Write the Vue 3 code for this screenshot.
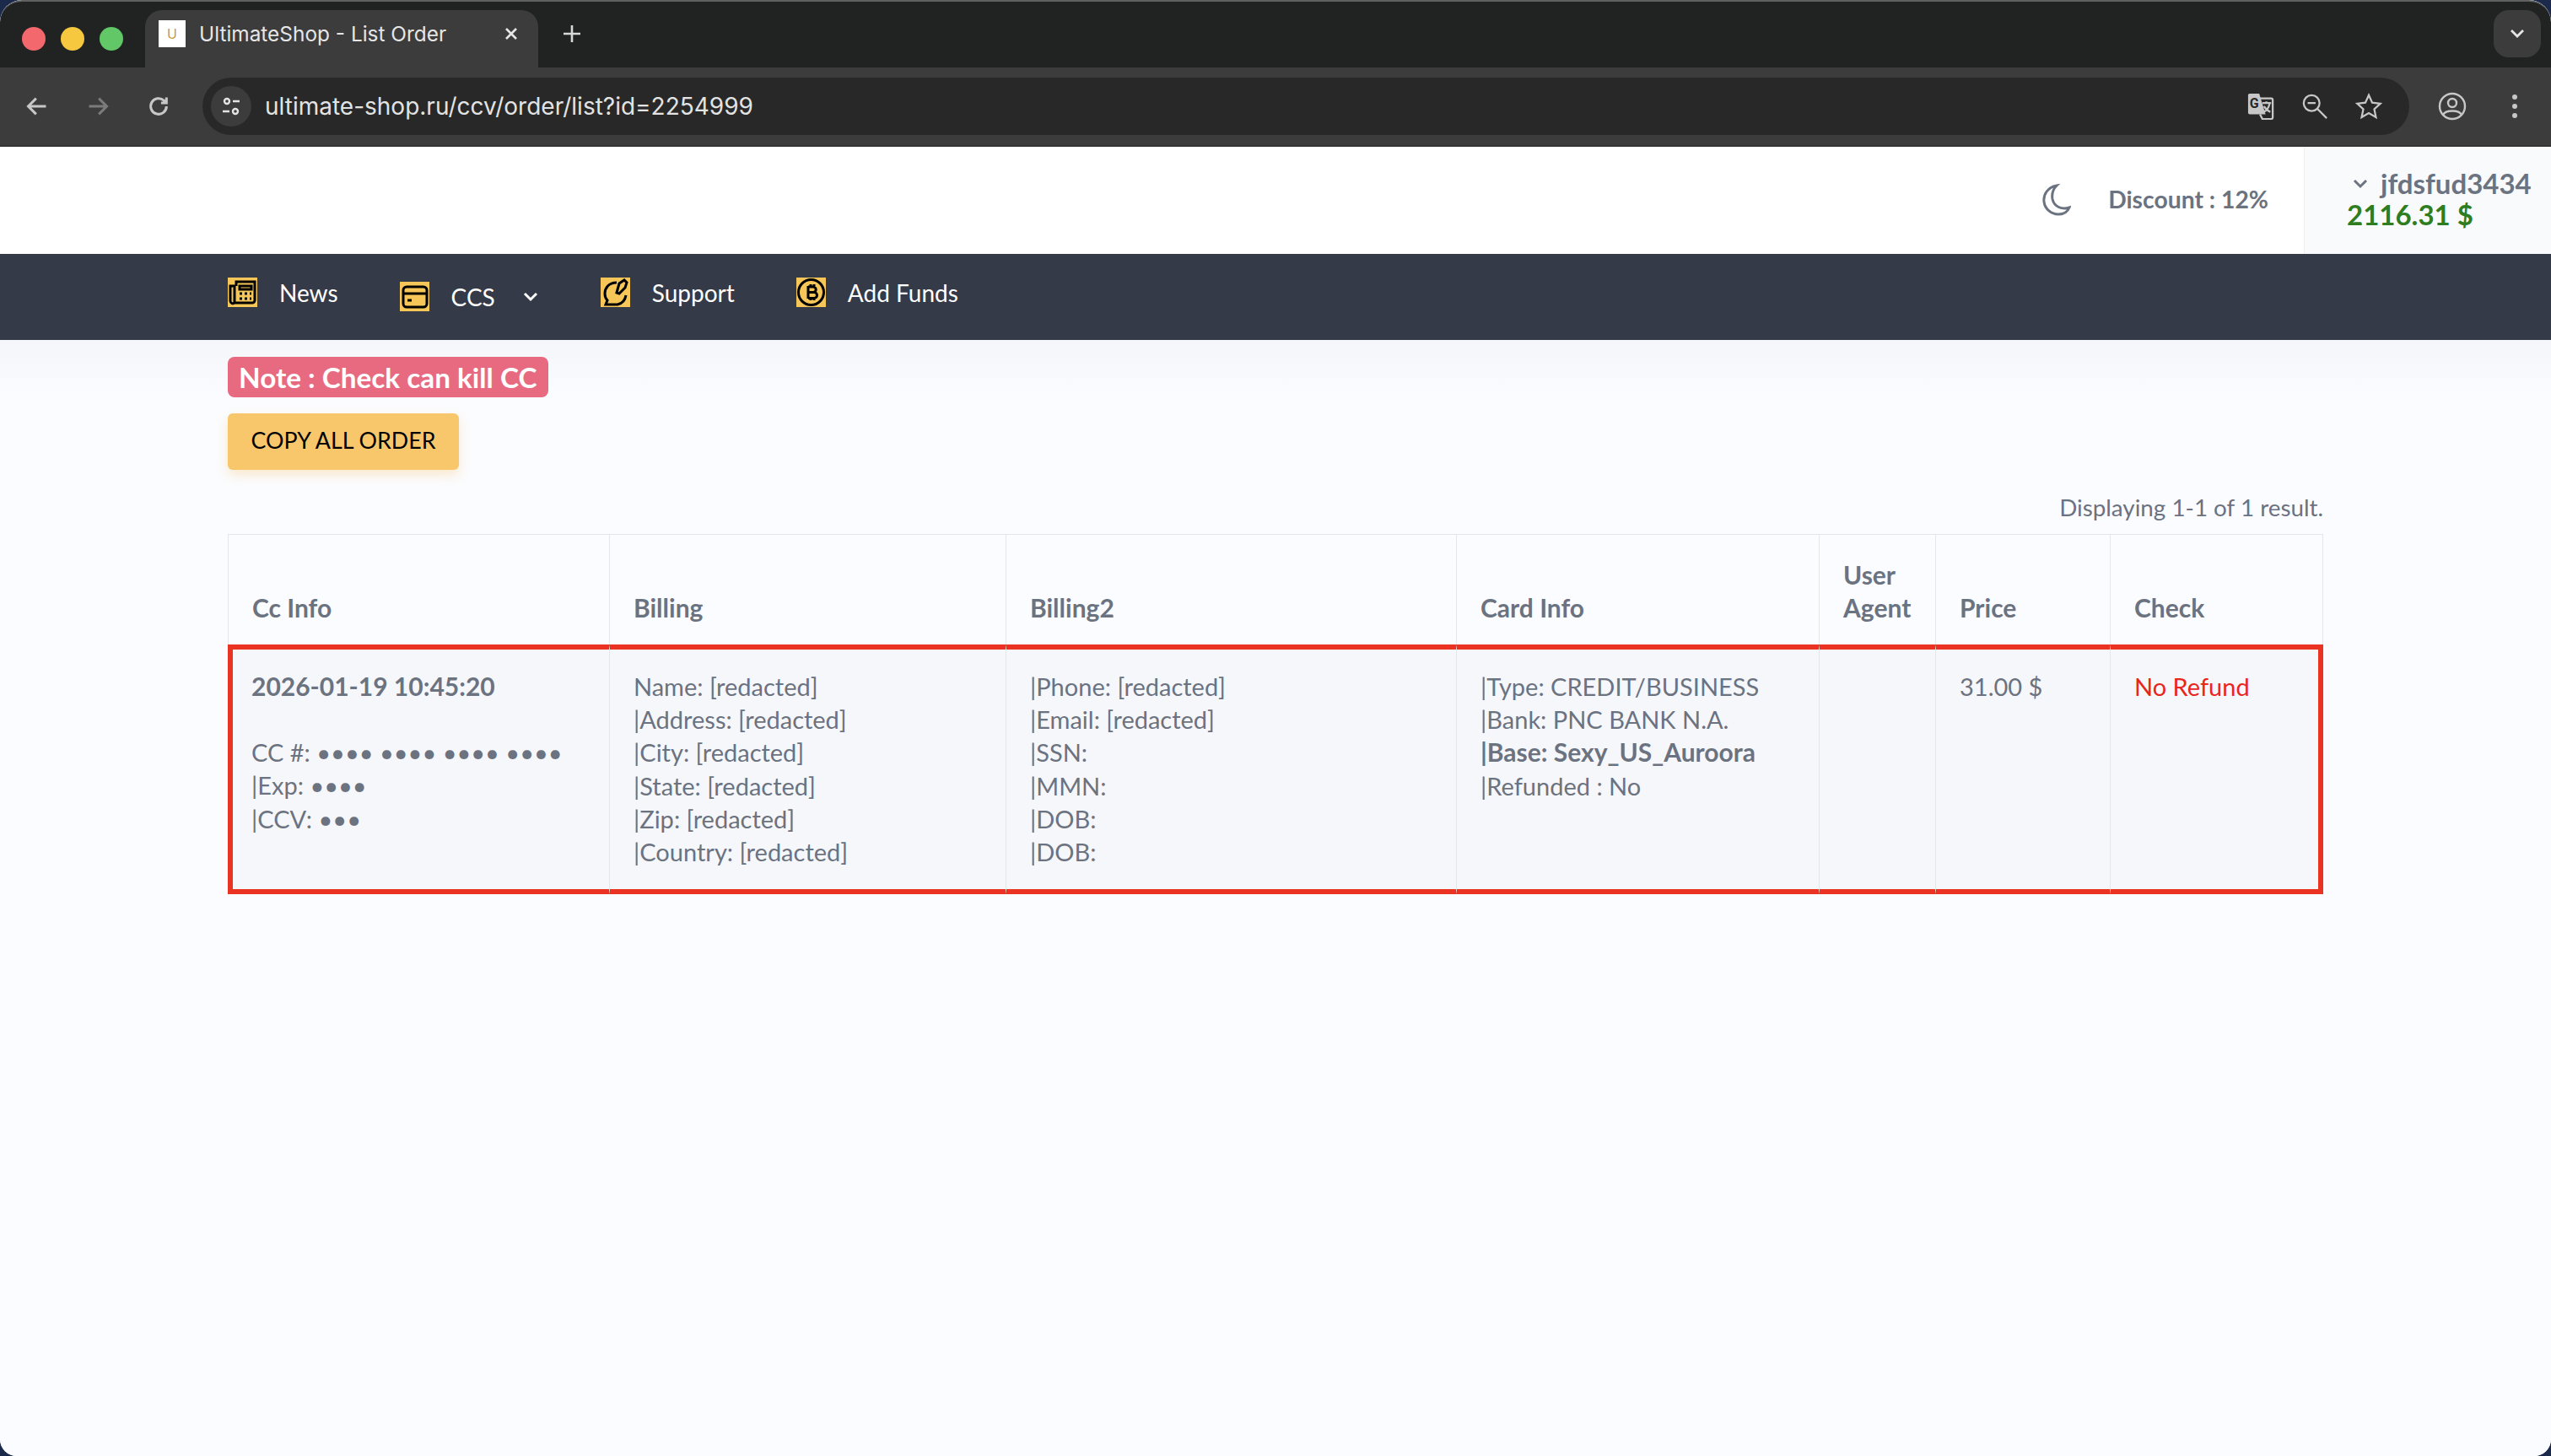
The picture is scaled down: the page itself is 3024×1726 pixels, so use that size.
<script setup>
const navItems = [
  { label: 'News', icon: 'news' },
  { label: 'CCS', icon: 'card', caret: true, low: true },
  { label: 'Support', icon: 'support' },
  { label: 'Add Funds', icon: 'coin' }
]
const columns = [
  { label: 'Cc Info', width: 453 },
  { label: 'Billing', width: 470 },
  { label: 'Billing2', width: 534 },
  { label: 'Card Info', width: 430 },
  { label: 'User Agent', width: 138 },
  { label: 'Price', width: 207 },
  { label: 'Check', width: 252 }
]
const ccLines = ['CC #: •••• •••• •••• ••••', '|Exp: ••••', '|CCV: •••']
const billing = ['Name: [redacted]', '|Address: [redacted]', '|City: [redacted]', '|State: [redacted]', '|Zip: [redacted]', '|Country: [redacted]']
const billing2 = ['|Phone: [redacted]', '|Email: [redacted]', '|SSN:', '|MMN:', '|DOB:', '|DOB:']
</script>

<template>
  <div class="window">
    <div class="tabbar">
      <div class="lights">
        <span class="light red"></span><span class="light yellow"></span><span class="light green"></span>
      </div>
      <div class="tab">
        <span class="favicon"><span class="fav-u">U</span></span>
        <span class="tab-title">UltimateShop - List Order</span>
        <svg class="tab-close" viewBox="0 0 20 20"><path d="M4 4l12 12M16 4L4 16" /></svg>
      </div>
      <svg class="new-tab" viewBox="0 0 24 24"><path d="M12 2v20M2 12h20" /></svg>
      <span class="tabbar-fill"></span>
      <span class="tab-menu"><svg viewBox="0 0 20 20"><path d="M3 6l7 7 7-7" /></svg></span>
    </div>
    <div class="toolbar">
      <svg class="tool" viewBox="0 0 24 24"><path d="M21 12H4M11 4l-8 8 8 8" /></svg>
      <svg class="tool dim" viewBox="0 0 24 24"><path d="M3 12h17M13 4l8 8-8 8" /></svg>
      <svg class="tool" viewBox="0 0 24 24"><path d="M20 12a8 8 0 1 1-2.6-5.9L20 8.5M20 3v5.5h-5.5" /></svg>
      <div class="omnibox">
        <span class="site-btn">
          <svg viewBox="0 0 24 24"><circle cx="7" cy="6" r="3" /><path d="M14 6h8M2 18h8" /><circle cx="17" cy="18" r="3" /></svg>
        </span>
        <span class="url">ultimate-shop.ru/ccv/order/list?id=2254999</span>
        <span class="omni-icons">
          <svg class="omni-icon" viewBox="0 0 34 34">
            <path class="solid" d="M3 1h12l8 26H3a2 2 0 0 1-2-2V3a2 2 0 0 1 2-2z" />
            <path d="M15 7h15a2 2 0 0 1 2 2v22a2 2 0 0 1-2 2H19l-3-6" />
            <path d="M19 13h11M24 11v3M21 24c4-2 6-6 7-10M21 17c2 3 5 6 8 7" />
            <text x="3" y="19" class="g">G</text>
          </svg>
          <svg class="omni-icon" viewBox="0 0 34 34"><circle cx="13" cy="13" r="10" /><path d="M20 20l12 12M8 13h10" /></svg>
          <svg class="omni-icon" viewBox="0 0 34 34"><path d="M17 3l4.3 9.4 10.2 1.2-7.6 7 2.1 10.1-9-5.2-9 5.2 2.1-10.1-7.6-7 10.2-1.2z" /></svg>
        </span>
      </div>
      <svg class="tool profile" viewBox="0 0 34 34"><circle cx="17" cy="17" r="15" /><circle cx="17" cy="13" r="5" /><path d="M6 27c3-6 19-6 22 0" /></svg>
      <span class="dots"><i></i><i></i><i></i></span>
    </div>

    <header class="site-header">
      <svg class="moon" viewBox="0 0 36 40"><path d="M19 3C8 5 3 14 4 22c1 9 9 15 17 15 6 0 11-3 13-8-9 3-18-1-20-10-1-6 1-12 5-16z" /></svg>
      <span class="discount">Discount : 12%</span>
      <div class="account">
        <div class="user-line">
          <svg class="user-caret" viewBox="0 0 20 14"><path d="M3 3l7 7 7-7" /></svg>
          <span class="user">jfdsfud3434</span>
        </div>
        <div class="balance">2116.31 $</div>
      </div>
    </header>

    <nav class="nav">
      <a v-for="item in navItems" :key="item.label" class="nav-item" :class="{ low: item.low }">
        <svg class="nav-icon" viewBox="0 0 35 35">
          <rect width="35" height="35" class="nav-icon-bg" />
          <g v-if="item.icon === 'news'">
            <path d="M3 10h5v20a3 3 0 0 1-5-2zM8 30h21a3 3 0 0 0 3-3V5H10v5" />
            <path d="M14 10h14v4H14zM14 19h3M20 19h3M26 19h2M14 25h3M20 25h3M26 25h2" />
          </g>
          <g v-else-if="item.icon === 'card'">
            <rect x="4" y="6" width="28" height="24" rx="4" />
            <path d="M4 14h28M9 22h5" />
          </g>
          <g v-else-if="item.icon === 'support'">
            <path d="M19 6C9 6 5 13 5 19c0 3 1 6 3 8l-2 5h14c5-1 9-5 10-11" />
            <path d="M19 18l3-11 6-4 3 3-2 6-7 7z" />
          </g>
          <g v-else>
            <circle cx="17.5" cy="17.5" r="15" />
            <path d="M14 10v15M14 11h6a3 3 0 0 1 0 6.5h-6M14 17.5h7a3.5 3.5 0 0 1 0 7h-7M17 8v3M21 8v3M17 24v3M21 24v3" />
          </g>
        </svg>
        <span class="nav-label">{{ item.label }}</span>
        <svg v-if="item.caret" class="nav-caret" viewBox="0 0 20 14"><path d="M3 3l7 7 7-7" /></svg>
      </a>
    </nav>

    <main class="content">
      <div><span class="note">Note : Check can kill CC</span></div>
      <button class="copy-btn">COPY ALL ORDER</button>
      <div class="summary">Displaying 1-1 of 1 result.</div>
      <table class="orders">
        <colgroup><col v-for="c in columns" :key="c.label" :style="{ width: c.width + 'px' }" /></colgroup>
        <thead>
          <tr><th v-for="c in columns" :key="c.label">{{ c.label }}</th></tr>
        </thead>
        <tbody>
          <tr>
            <td>
              <strong>2026-01-19 10:45:20</strong>
              <div class="gap"></div>
              <div v-for="l in ccLines" :key="l">{{ l }}</div>
            </td>
            <td><div v-for="l in billing" :key="l">{{ l }}</div></td>
            <td><div v-for="(l, i) in billing2" :key="i">{{ l }}</div></td>
            <td>
              <div>|Type: CREDIT/BUSINESS</div>
              <div>|Bank: PNC BANK N.A.</div>
              <strong>|Base: Sexy_US_Auroora</strong>
              <div>|Refunded : No</div>
            </td>
            <td></td>
            <td>31.00 $</td>
            <td class="refund">No Refund</td>
          </tr>
        </tbody>
      </table>
    </main>
  </div>
</template>

<style>
html, body { margin: 0; background: #1b2a4a; }
</style>

<style scoped>
.window {
  width: 3024px;
  height: 1726px;
  display: flex;
  flex-direction: column;
  overflow: hidden;
  border-radius: 26px 26px 20px 20px;
  background: #fbfcff;
  font-family: Lato, "Noto Sans", sans-serif;
  color: #6b7280;
}
svg { fill: none; stroke: currentColor; flex: none; }

.tabbar {
  height: 80px;
  flex: none;
  background: #212323;
  display: flex;
  align-items: flex-end;
  box-sizing: border-box;
  padding: 10px 12px 0 26px;
  border-top: 2px solid #5f6060;
  border-radius: 26px 26px 0 0;
}
.lights { display: flex; gap: 18px; align-self: center; }
.light { width: 28px; height: 28px; border-radius: 50%; }
.red { background: #f2686c; }
.yellow { background: #f5c83f; }
.green { background: #62c766; }
.tab {
  margin-left: 26px;
  width: 466px;
  height: 68px;
  box-sizing: border-box;
  padding: 0 22px 12px 16px;
  display: flex;
  align-items: center;
  background: #3c3c3c;
  border-radius: 20px 20px 0 0;
  color: #e6e6e6;
  font: 24.4px Inter, Roboto, sans-serif;
}
.favicon {
  width: 32px;
  height: 32px;
  background: #fff;
  display: flex;
  align-items: center;
  justify-content: center;
}
.fav-u { color: #c89b3c; font-size: 16px; line-height: 1; }
.tab-title { margin-left: 16px; flex: 1; white-space: nowrap; }
.tab-close { width: 20px; height: 20px; stroke-width: 2.6; }
.new-tab { width: 24px; height: 24px; margin: 0 0 28px 28px; color: #d8d8d8; stroke-width: 2.6; }
.tabbar-fill { flex: 1; }
.tab-menu {
  width: 56px;
  height: 56px;
  margin-bottom: 12px;
  border-radius: 18px;
  background: #3c3c3c;
  display: flex;
  align-items: center;
  justify-content: center;
  color: #e6e6e6;
}
.tab-menu svg { width: 20px; height: 20px; stroke-width: 2.8; }

.toolbar {
  height: 94px;
  flex: none;
  box-sizing: border-box;
  background: #3c3c3c;
  border-bottom: 2px solid #343434;
  display: flex;
  align-items: center;
  padding: 0 30px;
  color: #c7c7c7;
}
.tool { width: 28px; height: 28px; margin-right: 44px; stroke-width: 2.6; }
.dim { color: #7b7b7b; }
.omnibox {
  width: 2616px;
  height: 68px;
  margin-left: -6px;
  border-radius: 34px;
  background: #282828;
  display: flex;
  align-items: center;
  padding: 0 32px 0 10px;
  box-sizing: border-box;
  flex: none;
}
.site-btn {
  width: 48px;
  height: 48px;
  border-radius: 50%;
  background: #3c3c3c;
  display: flex;
  align-items: center;
  justify-content: center;
  color: #e3e3e3;
}
.site-btn svg { width: 24px; height: 24px; stroke-width: 2.4; }
.url { margin-left: 16px; flex: 1; color: #e3e3e3; font: 28px Inter, Roboto, sans-serif; }
.omni-icons { display: flex; align-items: center; gap: 32px; color: #c7c7c7; }
.omni-icon { width: 32px; height: 32px; stroke-width: 2.4; }
.solid { fill: #c7c7c7; stroke: none; }
.g { fill: #282828; stroke: none; font: bold 17px Roboto, sans-serif; }
.profile { width: 34px; height: 34px; margin: 0 0 0 34px; stroke-width: 2.4; }
.dots { margin-left: 54px; display: flex; flex-direction: column; gap: 5px; }
.dots i { width: 6px; height: 6px; border-radius: 50%; background: #c7c7c7; display: block; }

.site-header {
  height: 127px;
  flex: none;
  display: flex;
  align-items: center;
  justify-content: flex-end;
  background: #fff;
}
.moon { width: 36px; height: 40px; margin-top: -1px; stroke-width: 3; color: #6b7280; }
.discount { margin: -4px 0 0 44px; font-size: 28.3px; font-weight: 700; white-space: nowrap; }
.account {
  margin-left: 42px;
  width: 293px;
  height: 100%;
  box-sizing: border-box;
  background: #f9fafc;
  border-left: 1px solid #eff0f3;
  padding: 25px 0 0 50px;
  line-height: 37px;
}
.user-line { display: flex; align-items: center; padding-left: 6px; }
.user-caret { width: 20px; height: 14px; stroke-width: 3; }
.user { margin-left: 14px; font-size: 33px; font-weight: 700; white-space: nowrap; }
.balance { color: #2e7d1e; font-size: 33px; font-weight: 700; }

.nav {
  height: 102px;
  flex: none;
  background: #343a47;
  display: flex;
  align-items: flex-start;
  padding: 28px 0 0 270px;
  box-sizing: border-box;
  color: #fff;
}
.nav-item { display: flex; align-items: center; margin-right: 73px; }
.nav-item.low { margin-top: 5px; }
.nav-icon { width: 35px; height: 35px; stroke: #000; stroke-width: 3; }
.nav-icon-bg { fill: #f6c659; stroke: none; }
.nav-label { margin-left: 26px; font-size: 28px; color: #fff; white-space: nowrap; }
.nav-caret { width: 20px; height: 14px; margin-left: 32px; stroke: #fff; stroke-width: 3; }

.content {
  flex: 1;
  padding: 20px 270px 0;
  background: linear-gradient(#f5f6f9, #fbfcff 70px);
}
.note {
  display: inline-block;
  height: 48px;
  line-height: 48px;
  padding: 0 13px;
  border-radius: 8px;
  background: #e86a81;
  color: #fff;
  font-size: 33.3px;
  font-weight: 700;
}
.copy-btn {
  display: block;
  width: 274px;
  height: 67px;
  margin-top: 19px;
  border: none;
  border-radius: 6px;
  background: #f8c76c;
  box-shadow: 0 6px 14px rgba(248, 199, 108, 0.35);
  color: #000;
  font: 26.8px Lato, "Noto Sans", sans-serif;
  padding: 0 0 3px;
}
.summary { margin-top: 26px; text-align: right; font-size: 27.8px; line-height: 38px; }
.orders {
  margin-top: 12px;
  width: 2484px;
  table-layout: fixed;
  border-collapse: separate;
  border-spacing: 0;
  font-size: 29px;
  line-height: 39.2px;
}
.orders th, .orders td { padding: 0 28px; text-align: left; box-sizing: border-box; border-right: 1px solid #e4e6ea; }
.orders th {
  height: 131px;
  vertical-align: bottom;
  padding-bottom: 24px;
  font-size: 30px;
  font-weight: 700;
  border-top: 1px solid #e4e6ea;
}
.orders th:first-child { border-left: 1px solid #e4e6ea; }
.orders td {
  height: 296px;
  vertical-align: top;
  padding-top: 24px;
  background: #f6f7fb;
  border-top: 6px solid #ea3323;
  border-bottom: 6px solid #ea3323;
}
.orders td:first-child { border-left: 6px solid #ea3323; padding-left: 22px; }
.orders td:last-child { border-right: 6px solid #ea3323; }
.gap { height: 39px; }
.refund { color: #e8261c; }
strong { font-weight: 700; font-size: 30px; }
</style>
